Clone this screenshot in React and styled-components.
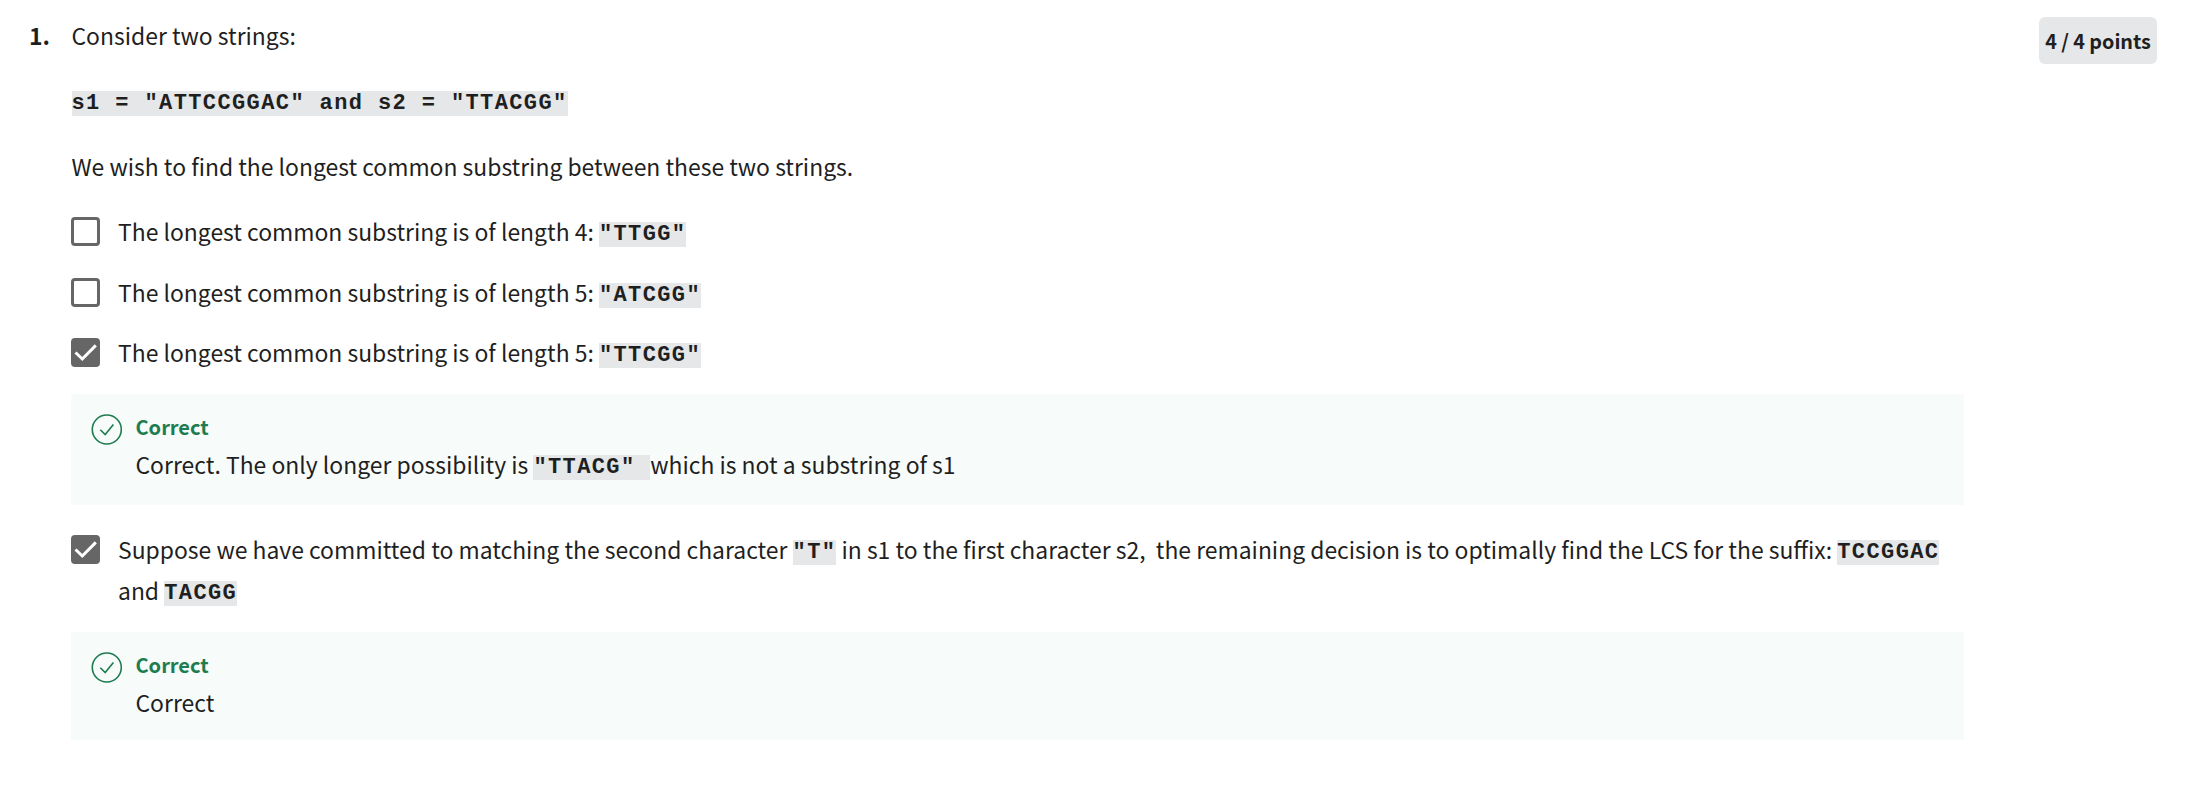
import React from "react";
import styled, { createGlobalStyle } from "styled-components";

const GlobalStyle = createGlobalStyle`
  * { box-sizing: border-box; }
  body { margin: 0; background: #fff; }
`;

const Question = styled.main`
  display: flex;
  align-items: flex-start;
  width: 2190px;
  height: 797px;
  padding: 15px 33px 0 29px;
  background: #fff;
  color: #1f1f1f;
  font-family: "Noto Sans CJK SC", "Noto Sans", sans-serif;
  font-size: 22.92px;
  line-height: 41px;
`;

const Number = styled.div`
  width: 42px;
  font-weight: 700;
`;

const Body = styled.section`
  width: 1893px;
`;

const Points = styled.div`
  width: 118px;
  height: 47px;
  margin: 2px 0 0 auto;
  border-radius: 6px;
  background: #e5e7e8;
  text-align: center;
  font-size: 19.8px;
  font-weight: 700;
  line-height: 47px;
  letter-spacing: -0.05px;
  white-space: nowrap;
`;

const Prompt = styled.p`
  margin: 0 0 ${({ $gap = 24 }) => $gap}px;
  padding-left: 0.5px;
`;

const Code = styled.code`
  background: #e5e7e8;
  font-family: "Liberation Mono", monospace;
  font-size: 22px;
  font-weight: 700;
  letter-spacing: 1.39px;
  line-height: 0;
  vertical-align: 1px;
  white-space: pre-wrap;
`;

const Option = styled.label`
  display: flex;
  align-items: flex-start;
  margin-bottom: ${({ $gap }) => $gap}px;
`;

const Box = styled.span`
  display: flex;
  flex: none;
  width: 29px;
  height: 29px;
  margin: 6px 18px 0 0;
  border: 3px solid #666;
  border-radius: 4px;
  background: ${({ $checked }) => ($checked ? "#666" : "#fff")};
`;

const Feedback = styled.div`
  display: flex;
  height: ${({ $height }) => $height}px;
  margin-bottom: 24px;
  padding: 14px 20px;
  background: #f7fbfa;
`;

const StatusIcon = styled.svg`
  flex: none;
  width: 31px;
  height: 31px;
  margin: 5.5px 13.5px 0 0;
`;

const Verdict = styled.div`
  color: #1d7c50;
  font-size: 20px;
  font-weight: 700;
  line-height: 38px;
`;

const Explanation = styled.div`
  line-height: 36px;
`;

function Checkbox({ checked }) {
  return (
    <Box $checked={checked}>
      {checked && (
        <svg width="23" height="23" viewBox="0 0 23 23" fill="none">
          <path d="M1.5 11.5 L8.3 18 L21.8 4.4" stroke="#fff" strokeWidth="3" />
        </svg>
      )}
    </Box>
  );
}

function Choice({ checked, gap, children }) {
  return (
    <Option $gap={gap}>
      <Checkbox checked={checked} />
      <span>{children}</span>
    </Option>
  );
}

function Result({ height, children }) {
  return (
    <Feedback $height={height}>
      <StatusIcon viewBox="0 0 31 31" fill="none" stroke="#1d7c50" strokeWidth="1.6">
        <circle cx="15.8" cy="15.5" r="14.5" />
        <path d="M9.3 15.7 L14.2 20.6 L22.4 10.5" />
      </StatusIcon>
      <div>
        <Verdict>Correct</Verdict>
        <Explanation>{children}</Explanation>
      </div>
    </Feedback>
  );
}

export default function App() {
  return (
    <>
      <GlobalStyle />
      <Question>
        <Number>1.</Number>
        <Body>
          <Prompt>Consider two strings:</Prompt>
          <Prompt $gap={25}>
            <Code>{'s1 = "ATTCCGGAC" and s2 = "TTACGG"'}</Code>
          </Prompt>
          <Prompt>We wish to find the longest common substring between these two strings.</Prompt>
          <Choice gap={20}>
            The longest common substring is of length 4: <Code>"TTGG"</Code>
          </Choice>
          <Choice gap={19}>
            The longest common substring is of length 5: <Code>"ATCGG"</Code>
          </Choice>
          <Choice checked gap={21}>
            The longest common substring is of length 5: <Code>"TTCGG"</Code>
          </Choice>
          <Result height={111}>
            Correct. The only longer possibility is <Code>{'"TTACG" '}</Code>which is not a
            substring of s1
          </Result>
          <Choice checked gap={21}>
            Suppose we have committed to matching the second character <Code>"T"</Code> in s1 to
            the first character s2,{"\u00a0 "}the remaining decision is to optimally find the LCS
            for the suffix: <Code>TCCGGAC</Code> and <Code>TACGG</Code>
          </Choice>
          <Result height={108}>Correct</Result>
        </Body>
        <Points>4 / 4 points</Points>
      </Question>
    </>
  );
}
